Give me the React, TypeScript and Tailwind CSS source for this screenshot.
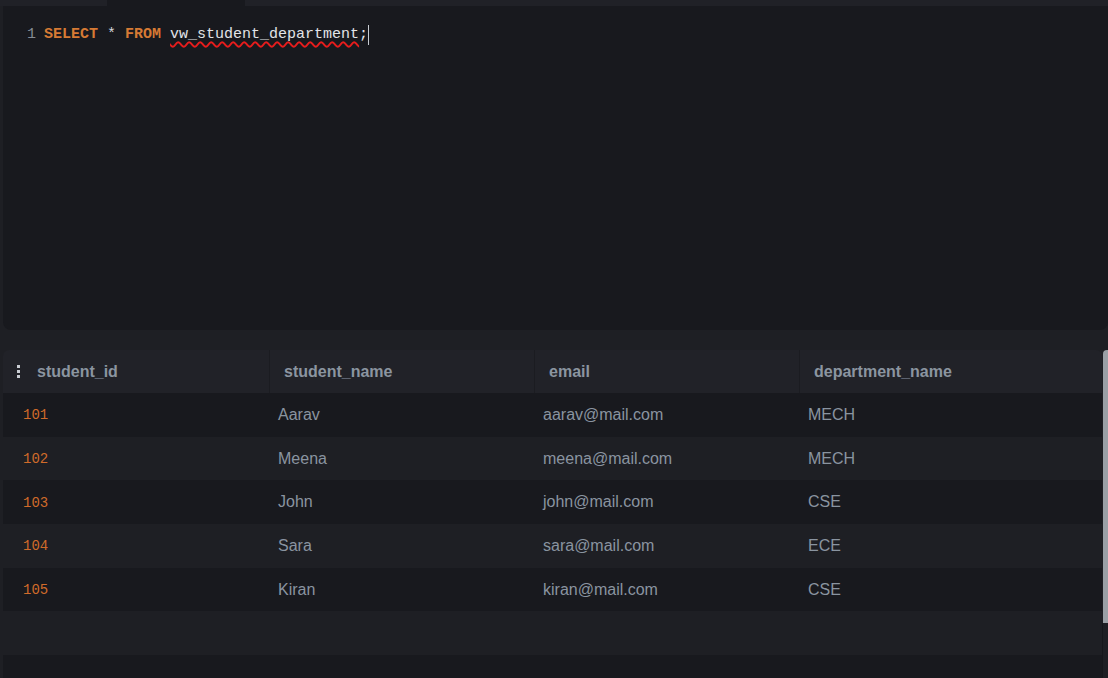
const columns = ["student_id", "student_name", "email", "department_name"];

const rows = [
  { id: "101", name: "Aarav", email: "aarav@mail.com", dept: "MECH" },
  { id: "102", name: "Meena", email: "meena@mail.com", dept: "MECH" },
  { id: "103", name: "John", email: "john@mail.com", dept: "CSE" },
  { id: "104", name: "Sara", email: "sara@mail.com", dept: "ECE" },
  { id: "105", name: "Kiran", email: "kiran@mail.com", dept: "CSE" },
];

function Kebab() {
  return (
    <div className="flex flex-col gap-[2px] mr-[17px]">
      <span className="block w-[3px] h-[3px] bg-[#c9cdd3]" />
      <span className="block w-[3px] h-[3px] bg-[#c9cdd3]" />
      <span className="block w-[3px] h-[3px] bg-[#c9cdd3]" />
    </div>
  );
}

function Editor() {
  return (
    <div className="flex flex-col h-[330px]">
      <div className="flex h-[6px] bg-[#202127]">
        <div className="w-[107px]" />
        <div className="w-[138px] bg-[#18191e]" />
      </div>
      <div className="flex-1 ml-[3px] bg-[#18191e] rounded-b-lg pt-[19px] pl-[24px] font-['Liberation_Mono',monospace] text-[15px] leading-[20px]">
        <div className="flex items-center">
          <span className="text-[#858b94] w-[17px]">1</span>
          <span className="font-bold text-[#d67a34]">SELECT</span>
          <span className="text-[#d4d7dc]">&nbsp;*&nbsp;</span>
          <span className="font-bold text-[#d67a34]">FROM</span>
          <span>&nbsp;</span>
          <span className="text-[#e2e4e8] underline decoration-wavy decoration-[#e81c1c] underline-offset-[3px] decoration-[1.5px]">
            vw_student_department
          </span>
          <span className="text-[#e2e4e8]">;</span>
          <span className="w-px h-[20px] bg-[#c8ccd2]" />
        </div>
      </div>
    </div>
  );
}

function ResultTable() {
  return (
    <div className="flex mt-[20px]">
      <div className="flex-1 ml-[3px] flex flex-col">
        <div className="grid grid-cols-[266px_265px_265px_1fr] h-[43px] bg-[#212228] rounded-t-md text-[16px] font-bold text-[#8b95a0]">
          {columns.map((c, i) => (
            <div
              key={c}
              className={
                i === 0
                  ? "flex items-center pl-[14px]"
                  : "flex items-center pl-[14px] border-l border-[#1b1c21]"
              }
            >
              {i === 0 && <Kebab />}
              {c}
            </div>
          ))}
        </div>
        {rows.map((r, i) => (
          <div
            key={r.id}
            className={
              "grid grid-cols-[266px_265px_265px_1fr] h-[43.7px] items-center text-[16px] text-[#8a94a0] " +
              (i % 2 === 0 ? "bg-[#18191e]" : "bg-[#1e1f24]")
            }
          >
            <div className="pl-[20px] pt-[2px] font-['Liberation_Mono',monospace] text-[14px] text-[#d06b2a]">
              {r.id}
            </div>
            <div className="pl-[9px]">{r.name}</div>
            <div className="pl-[9px]">{r.email}</div>
            <div className="pl-[9px]">{r.dept}</div>
          </div>
        ))}
        <div className="h-[43.7px] bg-[#1e1f24]" />
        <div className="h-[30px] bg-[#18191e]" />
      </div>
      <div className="w-[6px] flex flex-col">
        <div className="h-[273px] ml-[1px] bg-[#9aa0a6] rounded-tl-sm" />
        <div className="flex-1 border-l border-[#16171b]" />
      </div>
    </div>
  );
}

export default function App() {
  return (
    <div className="w-[1108px] h-[678px] overflow-hidden bg-[#1e1f24] font-['Liberation_Sans',Arial,sans-serif]">
      <Editor />
      <ResultTable />
    </div>
  );
}
